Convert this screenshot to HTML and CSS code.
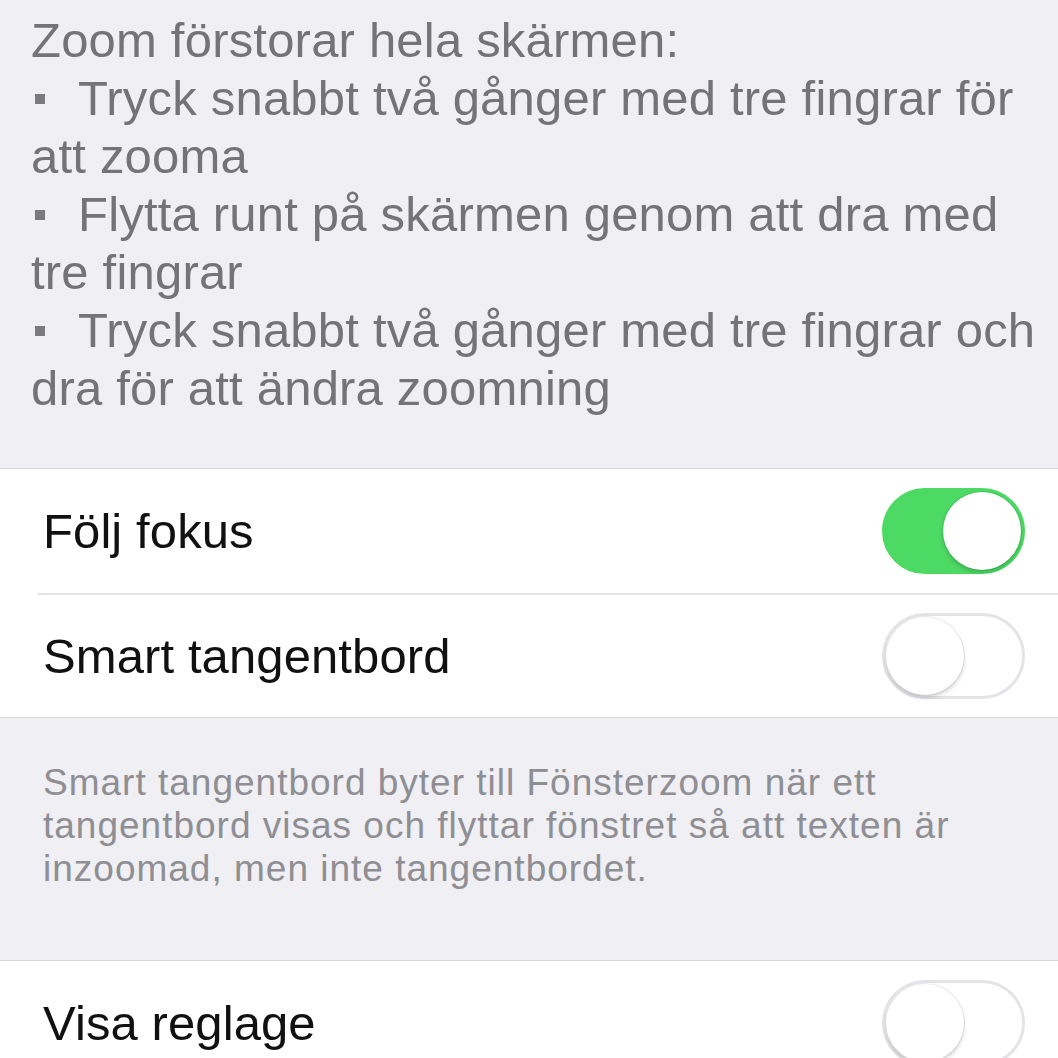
FILE: index.html
```html
<!DOCTYPE html>
<html lang="sv">
<head>
<meta charset="utf-8">
<link rel="stylesheet" href="styles.css">
</head>
<body>
<div class="screen">
  <div class="intro">
    <p class="line">Zoom förstorar hela skärmen:</p>
    <p class="line"><span class="bullet"></span>Tryck snabbt två gånger med tre fingrar för</p>
    <p class="line">att zooma</p>
    <p class="line"><span class="bullet"></span>Flytta runt på skärmen genom att dra med</p>
    <p class="line">tre fingrar</p>
    <p class="line"><span class="bullet"></span>Tryck snabbt två gånger med tre fingrar och</p>
    <p class="line">dra för att ändra zoomning</p>
  </div>

  <div class="group">
    <div class="row">
      <span class="label">Följ fokus</span>
      <span class="switch on"><span class="knob"></span></span>
    </div>
    <div class="row">
      <span class="label">Smart tangentbord</span>
      <span class="switch"><span class="knob"></span></span>
    </div>
  </div>

  <div class="footer">
    <p class="fline">Smart tangentbord byter till Fönsterzoom när ett</p>
    <p class="fline">tangentbord visas och flyttar fönstret så att texten är</p>
    <p class="fline">inzoomad, men inte tangentbordet.</p>
  </div>

  <div class="group">
    <div class="row">
      <span class="label">Visa reglage</span>
      <span class="switch"><span class="knob"></span></span>
    </div>
  </div>
</div>
</body>
</html>
```

FILE: styles.css
```css
html, body {
  margin: 0;
  padding: 0;
  background: #efeff4;
}
body {
  font-family: "Liberation Sans", Arial, sans-serif;
  width: 1058px;
  height: 1058px;
  overflow: hidden;
}
.screen {
  display: flex;
  flex-direction: column;
}
p { margin: 0; }

.intro {
  padding: 11px 0 51px 31px;
  color: #737378;
  font-size: 49px;
  line-height: 58px;
  letter-spacing: 0.2px;
}
.line {
  white-space: pre;
  height: 58px;
}
.bullet {
  display: inline-block;
  width: 10px;
  height: 10px;
  background: #7a7a7f;
  vertical-align: middle;
  margin: 0 33px 0 4px;
  position: relative;
  top: -3px;
}

.group {
  background: #fff;
  border-top: 1px solid #d6d6da;
  border-bottom: 1px solid #d6d6da;
  padding-left: 38px;
}
.row {
  height: 124px;
  display: flex;
  align-items: center;
  justify-content: space-between;
  padding-right: 33px;
  padding-left: 5px;
  box-sizing: border-box;
}
.row + .row {
  border-top: 2px solid #e2e2e6;
}
.label {
  font-size: 49px;
  letter-spacing: 0.1px;
  color: #111;
}

.switch {
  width: 143px;
  height: 86px;
  border-radius: 43px;
  box-sizing: border-box;
  border: 3px solid #e4e4e8;
  background: #fff;
  display: flex;
  align-items: center;
  padding: 0 1px;
}
.switch .knob {
  width: 78px;
  height: 78px;
  border-radius: 50%;
  background: #fff;
  box-shadow: 0 3px 4px rgba(0,0,0,0.16), 0 0 0 1px rgba(0,0,0,0.08);
}
.switch.on {
  background: #4cd964;
  border-color: #4cd964;
  justify-content: flex-end;
}

.footer {
  padding: 43px 0 70px 43px;
  color: #8e8e93;
  font-size: 37px;
  line-height: 43px;
  letter-spacing: 1px;
}
.fline {
  white-space: pre;
}
```
